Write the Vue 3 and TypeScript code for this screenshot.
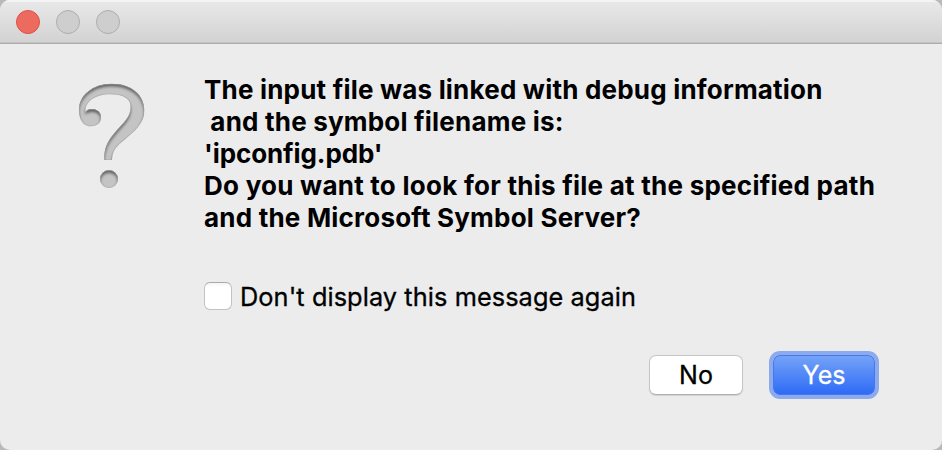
<script setup lang="ts">
import { ref } from 'vue'

const lines: { text: string; cls: string }[] = [
  { text: 'The input file was linked with debug information', cls: 'l1' },
  { text: ' and the symbol filename is:', cls: 'l2' },
  { text: "'ipconfig.pdb'", cls: 'l3' },
  { text: 'Do you want to look for this file at the specified path', cls: 'l4' },
  { text: 'and the Microsoft Symbol Server?', cls: 'l5' },
]
const suppress = ref(false)
</script>

<template>
  <div class="backdrop">
    <main class="window">
      <header class="titlebar">
        <span class="light close"></span>
        <span class="light"></span>
        <span class="light"></span>
      </header>
      <section class="content">
        <svg class="question" viewBox="0 0 330 390" aria-hidden="true">
          <defs>
            <path id="hook" d="M57 122C55 77 98 41 155 41C213 41 253 74 253 121C253 160 224 184 196 207C169 229 156 243 156 270H133C131 236 144 211 166 186C192 156 212 141 212 110C212 86 189 73 150 73C108 73 74 94 76 126C80 119 90 117 98 117C111 118 123 126 123 142C123 158 111 169 94 169C70 169 58 150 57 122Z" />
            <circle id="dot" cx="147" cy="327" r="27" />
            <clipPath id="shape"><use href="#hook" /><use href="#dot" /></clipPath>
            <filter id="soft" x="-20%" y="-20%" width="140%" height="140%"><feGaussianBlur stdDeviation="4" /></filter>
          </defs>
          <g fill="#c4c4c4"><use href="#hook" /><use href="#dot" /></g>
          <g clip-path="url(#shape)">
            <g class="shade" filter="url(#soft)" transform="translate(0 8)">
              <path fill-rule="evenodd" d="M0 0H330V390H0ZM57 122C55 77 98 41 155 41C213 41 253 74 253 121C253 160 224 184 196 207C169 229 156 243 156 270V290H133V270C131 236 144 211 166 186C192 156 212 141 212 110C212 86 189 73 150 73C108 73 74 94 76 126C80 119 90 117 98 117C111 118 123 126 123 142C123 158 111 169 94 169C70 169 58 150 57 122ZM120 327a27 27 0 1 0 54 0a27 27 0 1 0-54 0Z" />
            </g>
            <g class="rim"><use href="#hook" /><use href="#dot" /></g>
          </g>
        </svg>
        <div class="body">
          <div class="message">
            <div v-for="line in lines" :key="line.cls"><span :class="line.cls">{{ line.text }}</span></div>
          </div>
          <label class="check">
            <input v-model="suppress" type="checkbox" />
            <span class="caption">Don't display this message again</span>
          </label>
          <div class="actions">
            <button class="button no" type="button"><span>No</span></button>
            <button class="button yes" type="button"><span>Yes</span></button>
          </div>
        </div>
      </section>
    </main>
  </div>
</template>

<style>
body { margin: 0; overflow: hidden; }
</style>

<style scoped>
.backdrop { width: 942px; height: 450px; background: #b9b9b9; }
.window {
  box-sizing: border-box;
  height: 450px;
  border-radius: 10px;
  overflow: hidden;
  background: #ececec;
  font-family: Inter, "Liberation Sans", sans-serif;
  color: #000;
}
.titlebar {
  box-sizing: border-box;
  display: flex;
  align-items: center;
  gap: 16px;
  height: 44px;
  padding-left: 16px;
  background: linear-gradient(#e9e9e9, #d2d2d2);
  border-bottom: 1px solid #adadad;
  box-shadow: inset 0 2px 0 #f4f4f4, inset 0 -1px 0 #c4c4c4;
}
.light {
  box-sizing: border-box;
  width: 24px;
  height: 24px;
  border: 1px solid #adadad;
  border-radius: 50%;
  background: #cecece;
}
.close { background: #ed6a5f; border-color: #dd5148; }
.content { display: flex; padding: 26px 0 0 60px; }
.question { flex: none; display: block; width: 110px; height: 130px; }
.shade { fill: #5c5c5c; }
.rim { fill: none; stroke: #a5a5a5; stroke-width: 5; stroke-opacity: 0.6; }
.body { flex: none; width: 710px; padding: 4px 0 0 34px; }
.message { font-size: 26px; line-height: 32px; font-weight: 700; white-space: pre; }
.l1 { letter-spacing: 0.2px; }
.l2 { letter-spacing: 0.2px; }
.l3 { letter-spacing: -0.1px; }
.l4 { letter-spacing: 0.25px; }
.l5 { letter-spacing: 0.21px; }
.check { display: flex; align-items: center; gap: 8px; margin-top: 46px; height: 32px; font-size: 25.3px; line-height: 32px; white-space: nowrap; }
.caption { padding-top: 1px; letter-spacing: 0.09px; -webkit-text-stroke: 0.3px currentColor; }
.check input {
  appearance: none;
  box-sizing: border-box;
  flex: none;
  width: 28px;
  height: 28px;
  margin: 0;
  border: 1px solid #c3c3c3;
  border-top-color: #aaa;
  border-radius: 6px;
  background: linear-gradient(#f5f5f5, #fff 4px);
}
.actions { display: flex; align-items: center; gap: 26px; height: 48px; margin-top: 39px; padding-left: 445px; }
.button {
  box-sizing: border-box;
  padding: 0;
  font-family: inherit;
  font-size: 25px;
  line-height: 30px;
  -webkit-text-stroke: 0.3px currentColor;
}
.no {
  width: 94px;
  height: 40px;
  border: 1px solid #c6c6c6;
  border-bottom-color: #afafaf;
  border-radius: 7px;
  background: #fff;
  color: #000;
  box-shadow: 0 1px 1px #0000001c;
}
.yes {
  width: 110px;
  height: 48px;
  border: 4px solid #8caaec;
  border-radius: 11px;
  background: linear-gradient(#76a4f7, #2c6af6) padding-box;
  color: #fff;
  box-shadow: inset 0 0 0 1px #4079f2;
}
</style>
